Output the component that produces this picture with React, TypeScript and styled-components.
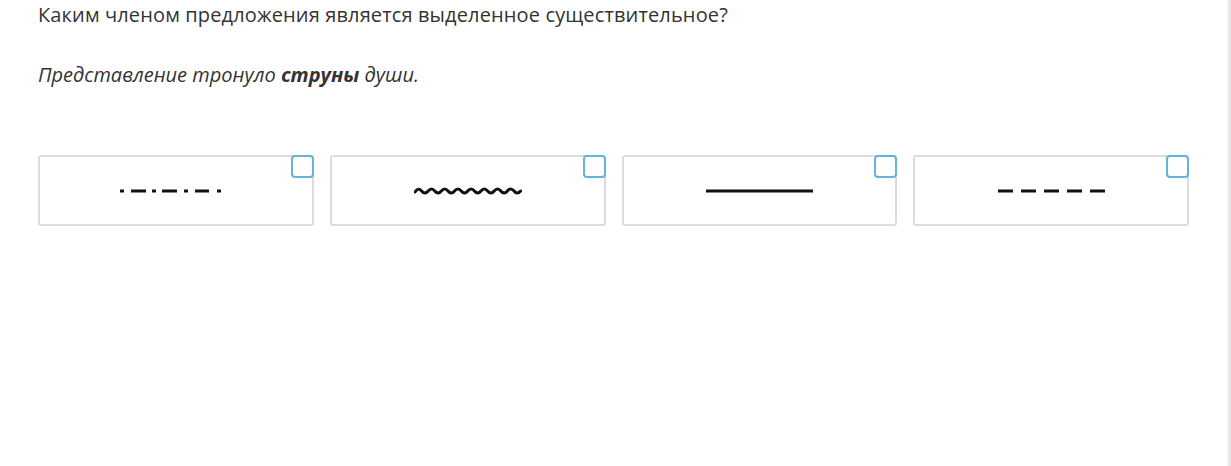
import { createGlobalStyle, styled } from "styled-components";

const GlobalStyle = createGlobalStyle`
  html, body {
    margin: 0;
    padding: 0;
    background: #ffffff;
  }
  body {
    font-family: "Open Sans", "Liberation Sans", sans-serif;
    color: #333333;
  }
`;

const Page = styled.div`
  box-sizing: border-box;
  width: 1231px;
  height: 466px;
  padding: 0 39px 0 38px;
  border-right: 3px solid #e8e8e8;
  background: #ffffff;
`;

const Question = styled.p`
  margin: 0;
  font-size: 20px;
  line-height: 30px;
  letter-spacing: 0.13px;
  color: #333333;
`;

const Sentence = styled.p`
  margin: 30px 0 0;
  font-size: 20px;
  line-height: 30px;
  font-style: italic;
  color: #333333;

  b {
    font-weight: 700;
  }
`;

const Options = styled.div`
  display: grid;
  grid-template-columns: repeat(4, 1fr);
  gap: 16px;
  margin-top: 65px;
`;

const Card = styled.div`
  position: relative;
  box-sizing: border-box;
  height: 71px;
  border: 2px solid #dcdcdc;
  border-radius: 3px;
  background: #ffffff;
  display: flex;
  align-items: center;
  justify-content: center;
  cursor: pointer;
`;

const Check = styled.span`
  position: absolute;
  top: -2px;
  right: -2px;
  box-sizing: border-box;
  width: 23px;
  height: 23px;
  border: 2px solid #62b4d8;
  border-radius: 4px;
  background: #ffffff;
`;

const Mark = styled.svg<{ $shift?: number }>`
  display: block;
  margin-left: ${(p) => (p.$shift ? `${p.$shift}px` : "0")};
`;

const DashDot = () => (
  <Mark width="102" height="10" viewBox="0 0 102 10" $shift={-10}>
    <g stroke="#111" strokeWidth="3">
      <line x1="0" y1="5" x2="4" y2="5" />
      <line x1="11" y1="5" x2="26" y2="5" />
      <line x1="32" y1="5" x2="36" y2="5" />
      <line x1="42" y1="5" x2="57" y2="5" />
      <line x1="64" y1="5" x2="68" y2="5" />
      <line x1="75" y1="5" x2="89" y2="5" />
      <line x1="97" y1="5" x2="101" y2="5" />
    </g>
  </Mark>
);

const Wave = () => {
  let d = "M1 6";
  for (let i = 0; i < 8; i++) {
    const x = 1 + i * 13.2;
    d += ` Q${x + 3.3} 1 ${x + 6.6} 5 Q${x + 9.9} 9 ${x + 13.2} 5`;
  }
  return (
    <Mark width="108" height="10" viewBox="0 0 108 10">
      <path d={d} fill="none" stroke="#111" strokeWidth="3" strokeLinecap="round" />
    </Mark>
  );
};

const Solid = () => (
  <Mark width="107" height="10" viewBox="0 0 107 10">
    <line x1="0" y1="5" x2="107" y2="5" stroke="#111" strokeWidth="3" />
  </Mark>
);

const Dashed = () => (
  <Mark width="107" height="10" viewBox="0 0 107 10">
    <g stroke="#111" strokeWidth="3">
      {[0, 1, 2, 3, 4].map((i) => (
        <line key={i} x1={i * 23} y1="5" x2={i * 23 + 15} y2="5" />
      ))}
    </g>
  </Mark>
);

const options = [DashDot, Wave, Solid, Dashed];

export default function App() {
  return (
    <>
      <GlobalStyle />
      <Page>
        <Question>Каким членом предложения является выделенное существительное?</Question>
        <Sentence>
          Представление тронуло <b>струны</b> души.
        </Sentence>
        <Options>
          {options.map((Icon, i) => (
            <Card key={i}>
              <Icon />
              <Check />
            </Card>
          ))}
        </Options>
      </Page>
    </>
  );
}
